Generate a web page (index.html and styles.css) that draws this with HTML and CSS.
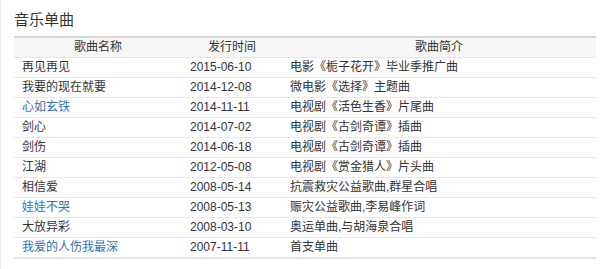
FILE: index.html
```html
<!DOCTYPE html>
<html lang="zh-CN">
<head>
    <meta charset="UTF-8">
    <title>音乐单曲</title>
    <link rel="stylesheet" href="styles.css">
</head>
<body>
    <div class="panel">
        <h2 class="panel-title">音乐单曲</h2>
        <table class="song-table">
            <thead>
                <tr>
                    <th class="col-name">歌曲名称</th>
                    <th class="col-date">发行时间</th>
                    <th class="col-desc">歌曲简介</th>
                </tr>
            </thead>
            <tbody>
                <tr><td>再见再见</td><td>2015-06-10</td><td>电影《栀子花开》毕业季推广曲</td></tr>
                <tr><td>我要的现在就要</td><td>2014-12-08</td><td>微电影《选择》主题曲</td></tr>
                <tr><td><a href="#">心如玄铁</a></td><td>2014-11-11</td><td>电视剧《活色生香》片尾曲</td></tr>
                <tr><td>剑心</td><td>2014-07-02</td><td>电视剧《古剑奇谭》插曲</td></tr>
                <tr><td>剑伤</td><td>2014-06-18</td><td>电视剧《古剑奇谭》插曲</td></tr>
                <tr><td>江湖</td><td>2012-05-08</td><td>电视剧《赏金猎人》片头曲</td></tr>
                <tr><td>相信爱</td><td>2008-05-14</td><td>抗震救灾公益歌曲,群星合唱</td></tr>
                <tr><td><a href="#">娃娃不哭</a></td><td>2008-05-13</td><td>赈灾公益歌曲,李易峰作词</td></tr>
                <tr><td>大放异彩</td><td>2008-03-10</td><td>奥运单曲,与胡海泉合唱</td></tr>
                <tr><td><a href="#">我爱的人伤我最深</a></td><td>2007-11-11</td><td>首支单曲</td></tr>
            </tbody>
        </table>
    </div>
</body>
</html>
```

FILE: styles.css
```css
* {
    margin: 0;
    padding: 0;
    box-sizing: border-box;
}

body {
    background: #fff;
    color: #333;
    font-family: 'Liberation Sans', Arial, 'Noto Sans CJK SC', sans-serif;
    font-size: 12px;
}

.panel {
    padding: 10px 4px 0 13px;
    border-left: 1px solid #f0f0f0;
    min-height: 269px;
}

.panel-title {
    font-size: 15px;
    font-weight: normal;
    line-height: 20px;
    color: #333;
    margin-bottom: 6px;
}

.song-table {
    width: 582px;
    border-collapse: collapse;
    border-top: 2px solid #d6d6d6;
    border-bottom: 2px solid #e4e4e4;
}

.song-table th {
    line-height: 19px;
    background: #f7f7f7;
    font-weight: normal;
    text-align: center;
    border-bottom: 1px solid #e6e6e6;
}

.song-table td {
    line-height: 19px;
    padding: 0 8px;
    border-top: 1px solid #e8e8e8;
    white-space: nowrap;
}

.col-name {
    width: 168px;
}

.col-date {
    width: 100px;
}

.song-table a {
    color: #3071b3;
    text-decoration: none;
}
```
